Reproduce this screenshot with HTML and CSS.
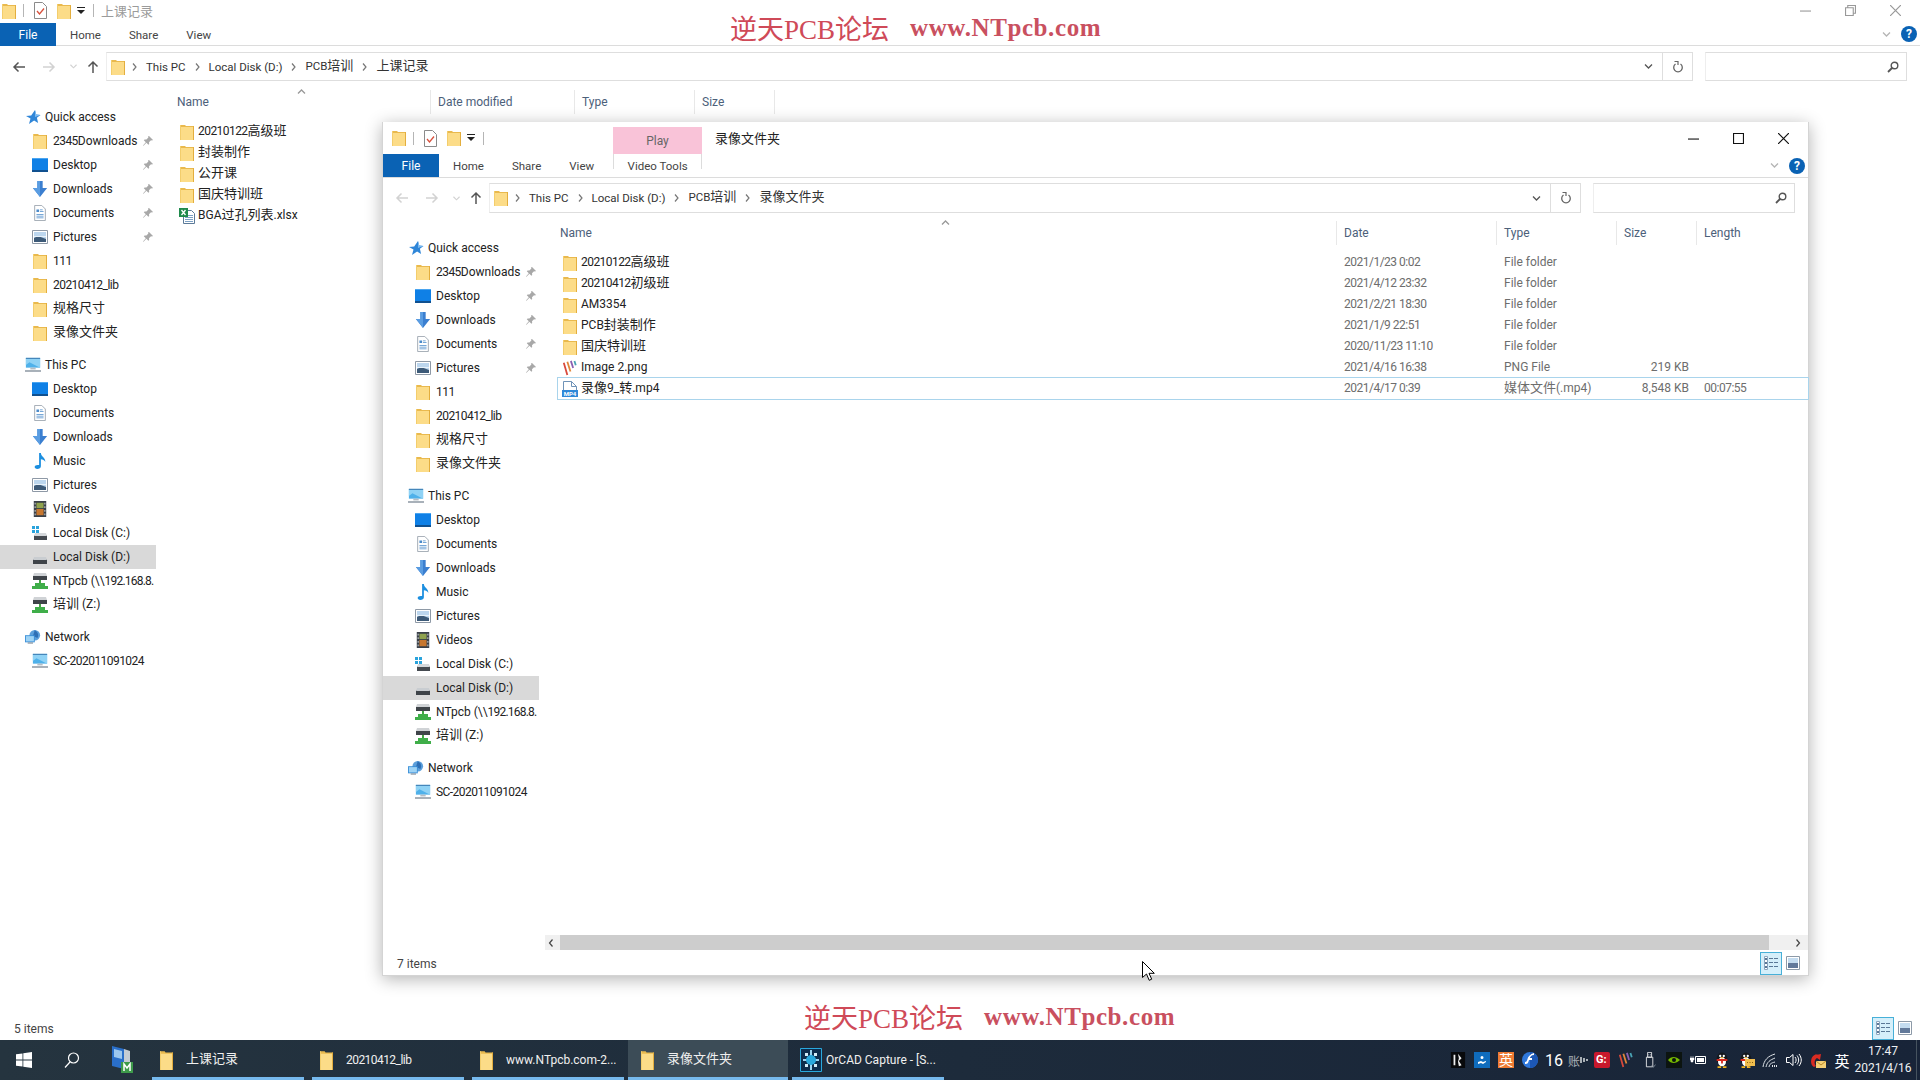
FILE: index.html
```html
<!DOCTYPE html>
<html lang="en">
<head>
    <meta charset="UTF-8">
    <title>录像文件夹</title>
    <link rel="stylesheet" href="styles.css">
</head>
<body>
<svg class="defs">
    <symbol id="folder" viewBox="0 0 14 16" preserveAspectRatio="none"><path d="M0 1h5l1 1h8v14H0z" fill="#e9b94e"/><path d="M0 3h13v13H0z" fill="#fcdc88"/><path d="M0 1h1v15H0z" fill="#f3cd6c"/><path d="M13 2h1v14h-1z" fill="#e3ae3e"/></symbol>
    <symbol id="star" viewBox="0 0 16 16"><path d="M10 1l1.2 4.6L15.5 6l-3.6 2.8 1.2 5.2-4-2.6L4 15l1.5-5.4L1 7l5.200-.6z" fill="#2f86d8"/><path d="M10 1l1.200 4.600L15.500 6 10 8z" fill="#7fbcf0"/></symbol>
    <symbol id="pin" viewBox="0 0 10 10"><path d="M6 0l4 4-1 .6-1-.4-2 2 .2 1.800-.8.800-2-2L.5 9.800 0 9.500l2.800-3.300-2-2 .8-.800 1.800.200 2-2-.4-1z" fill="#a8a8a8"/></symbol>
    <symbol id="desktop" viewBox="0 0 16 14"><path d="M0 0h16v14H0z" fill="#0f80e6"/><path d="M0 0h16v1H0z" fill="#4aa5f0"/><path d="M0 12h16v2H0z" fill="#10508f"/></symbol>
    <symbol id="download" viewBox="0 0 16 18"><path d="M5 0h6v8h5l-8 10L0 8h5z" fill="#3b7fd0"/><path d="M5 0h3v18L0 8h5z" fill="#5a9de2"/></symbol>
    <symbol id="doc" viewBox="0 0 14 18"><path d="M1 .5h8l4 4v13H1z" fill="#fff" stroke="#9aa3ad"/><path d="M3 5h3v3H3zM7 5h3v1H7zM7 7h4v1H7zM3 10h8v1H3zM3 12h8v1H3zM3 14h8v1H3z" fill="#4b8ac9"/></symbol>
    <symbol id="pictures" viewBox="0 0 16 14"><path d="M.5.500h15v13H.5z" fill="#fff" stroke="#8e99a6"/><path d="M2 2h12v10H2z" fill="#bcd6ee"/><path d="M2 8l4-2 8 3v3H2z" fill="#3d5a78"/><path d="M2 6h12v1H2z" fill="#e8f2fa"/></symbol>
    <symbol id="music" viewBox="0 0 12 18"><path d="M5 0h2c0 4 5 5 5 10-1-2-3-3-5-3v8c0 2-2 3-4 3s-3-1-3-2.500S2 13 5 13.500z" fill="#1c8fe0"/></symbol>
    <symbol id="video" viewBox="0 0 14 18"><path d="M0 0h14v18H0z" fill="#3a4048"/><path d="M3 2h8v6H3z" fill="#8fa24e"/><path d="M3 9h8v7H3z" fill="#c7772f"/><path d="M1 2h1v2H1zM1 6h1v2H1zM1 10h1v2H1zM1 14h1v2H1zM12 2h1v2h-1zM12 6h1v2h-1zM12 10h1v2h-1zM12 14h1v2h-1z" fill="#dfe3e6"/></symbol>
    <symbol id="diskc" viewBox="0 0 16 16"><path d="M2 10h13v5H2z" fill="#454a50"/><path d="M3 8h11l1 3H2z" fill="#d5d8db"/><path d="M0 1h3v3H0zM4 1h3v3H4zM0 5h3v3H0zM4 5h3v3H4z" fill="#2aa3dc"/></symbol>
    <symbol id="diskd" viewBox="0 0 16 8"><path d="M1 3h14v5H1z" fill="#3f4449"/><path d="M2 1h12l1 3H1z" fill="#c9cdd1"/></symbol>
    <symbol id="netdisk" viewBox="0 0 16 16"><path d="M2 0h12l1 3H1z" fill="#d0d3d6"/><path d="M1 3h14v4H1z" fill="#3f4449"/><path d="M7 7h2v3H7z" fill="#46a546"/><path d="M3 10h10v3H3zM0 13h16v3H0z" fill="#3fae49"/></symbol>
    <symbol id="pc" viewBox="0 0 18 16"><path d="M1 0h16v11H1z" fill="#4fb1ea"/><path d="M1 0h16v11L5 5 1 8z" fill="#8fd2f5"/><path d="M1 .5h16" stroke="#2c6ca5"/><path d="M6 11h6v2H6z" fill="#b5bdc5"/><path d="M0 14h18v1.500H0z" fill="#7d8a97"/></symbol>
    <symbol id="network" viewBox="0 0 18 18"><circle cx="11" cy="7" r="6" fill="#5b9fdb"/><path d="M11 1c3 2 5 5 3 9l-5-2z" fill="#2e6fb5"/><path d="M0 7h11v8H0z" fill="#3b8fd8"/><path d="M1 8h9v6H1z" fill="#9ed3f5"/><path d="M3 15h6v1.500H3z" fill="#8d99a5"/></symbol>
    <symbol id="xlsx" viewBox="0 0 16 16"><path d="M4.500 2.500h8l3 3v10h-11z" fill="#fff" stroke="#5c7a98"/><path d="M6 7h8v1H6zM6 9h8v1H6zM6 11h8v1H6zM6 13h8v1H6z" fill="#7ba0c4"/><path d="M0 0h9v9H0z" fill="#1f8a4c"/><path d="M2.500 2l4 5M6.500 2l-4 5" stroke="#fff" stroke-width="1.300"/></symbol>
    <symbol id="bars" viewBox="0 0 16 18"><path d="M1 3l4 14" stroke="#d9483b" stroke-width="2" fill="none"/><path d="M5 2l3.500 11" stroke="#e0863a" stroke-width="2" fill="none"/><path d="M9 1l2.500 8" stroke="#8a5fb0" stroke-width="2" fill="none"/><path d="M13 1l1.500 5" stroke="#4aa3b5" stroke-width="2" fill="none"/></symbol>
    <symbol id="mp4" viewBox="0 0 16 16"><path d="M1.500.5h8l5 5v10h-13z" fill="#fff" stroke="#6f93b8"/><path d="M9.500.5v5h5" fill="none" stroke="#6f93b8"/><path d="M0 9h16v7H0z" fill="#2f88d8"/></symbol>
    <symbol id="check-doc" viewBox="0 0 13 17"><path d="M.5.500h8l4 4v12H.5z" fill="#fff" stroke="#8a8a8a"/><path d="M3 9l2.500 3L10 6.500" stroke="#d8503c" stroke-width="1.300" fill="none"/></symbol>
    <symbol id="dropline" viewBox="0 0 8 8"><path d="M0 .5h8" stroke="#222"/><path d="M0 3h8L4 7z" fill="#222"/></symbol>
    <symbol id="arrow-left" viewBox="0 0 14 12"><path d="M13 6H2M6.500 1.500L2 6l4.500 4.500" fill="none" stroke="currentColor" stroke-width="1.500"/></symbol>
    <symbol id="arrow-right" viewBox="0 0 14 12"><path d="M1 6h11M7.500 1.500L12 6l-4.500 4.500" fill="none" stroke="currentColor" stroke-width="1.500"/></symbol>
    <symbol id="arrow-up" viewBox="0 0 12 14"><path d="M6 13V2M1.500 6.500L6 2l4.500 4.500" fill="none" stroke="currentColor" stroke-width="1.500"/></symbol>
    <symbol id="chev-down" viewBox="0 0 8 5"><path d="M.5.500L4 4 7.500.500" fill="none" stroke="currentColor" stroke-width="1.300"/></symbol>
    <symbol id="chev-right" viewBox="0 0 5 8"><path d="M1 .5L4 4 1 7.500" fill="none" stroke="currentColor" stroke-width="1.200"/></symbol>
    <symbol id="refresh" viewBox="0 0 12 12"><path d="M3.500 3a4.300 4.300 0 1 0 5 0" fill="none" stroke="currentColor" stroke-width="1.300"/><path d="M2.500.5h3.500V4" fill="none" stroke="currentColor" stroke-width="1.200"/></symbol>
    <symbol id="search" viewBox="0 0 12 12"><circle cx="7.500" cy="4.500" r="3.300" fill="none" stroke="#555" stroke-width="1.400"/><path d="M5 7L1 11" stroke="#555" stroke-width="1.800"/></symbol>
    <symbol id="minimize" viewBox="0 0 10 10"><path d="M0 5.500h10" stroke="currentColor"/></symbol>
    <symbol id="maximize" viewBox="0 0 10 10"><path d="M.5.500h9v9h-9z" fill="none" stroke="currentColor"/></symbol>
    <symbol id="restore" viewBox="0 0 10 10"><path d="M.5 2.500h7v7h-7zM2.500 2.500v-2h7v7h-2" fill="none" stroke="currentColor"/></symbol>
    <symbol id="close" viewBox="0 0 10 10"><path d="M0 0l10 10M10 0L0 10" stroke="currentColor" stroke-width="1.100"/></symbol>
    <symbol id="view-details" viewBox="0 0 16 16"><path d="M1.500 1.500h3v13h-3z" fill="#fff" stroke="#8ca6bf"/><path d="M2 3h2v2H2zM2 7h2v2H2zM2 11h2v2H2z" fill="#5a7896"/><path d="M6 3h4v1H6zM11 3h4v1h-4zM6 7h4v1H6zM11 7h4v1h-4zM6 11h4v1H6zM11 11h4v1h-4z" fill="#5a7896"/></symbol>
    <symbol id="view-large" viewBox="0 0 14 14"><path d="M.5.500h13v13H.5z" fill="#fff" stroke="#8d9aa8"/><path d="M2 2h10v5H2z" fill="#c4dcf0"/><path d="M2 7h10v5H2z" fill="#62799a"/></symbol>
    <symbol id="win" viewBox="0 0 16 16"><path d="M0 2.300l6.500-.9v6.200H0zM7.300 1.300L16 0v7.600H7.300zM0 8.400h6.500v6.200L0 13.700zM7.300 8.400H16V16l-8.700-1.300z" fill="#fff"/></symbol>
    <symbol id="magnifier" viewBox="0 0 16 16"><circle cx="9.500" cy="6" r="5" fill="none" stroke="#fff" stroke-width="1.200"/><path d="M6 10l-5 5.500" stroke="#fff" stroke-width="1.200"/></symbol>
    <symbol id="server" viewBox="0 0 24 30"><path d="M2 1l12 3v20L2 21z" fill="#2a6fc9"/><path d="M4 4l8 2v8l-8-2z" fill="#9cc7ee"/><path d="M14 4l6 2v18l-6 2z" fill="#c5ccd3"/><path d="M11 17h12v11H11z" fill="#3d9a4a"/><path d="M14 26v-7l3 4 3-4v7" stroke="#fff" stroke-width="1.500" fill="none"/></symbol>
    <symbol id="orcad" viewBox="0 0 22 24"><path d="M.5.500h21v23H.5z" fill="#0d2d4d" stroke="#2aa8dc"/><path d="M11 2v20M3 12h16" stroke="#9ad4f0" stroke-width="2"/><circle cx="11" cy="12" r="5" fill="#2aa8dc"/><path d="M5 5h3v3H5zM14 5h3v3h-3zM5 16h3v3H5zM14 16h3v3h-3z" fill="#d5edf8"/></symbol>
    <symbol id="tray-black" viewBox="0 0 16 18"><path d="M0 0h16v18H0z" fill="#08090b"/><path d="M3 3h2v12H3zM8 2l4 5-3 3 3 5-3 1-1-5 1-4z" fill="#eee"/></symbol>
    <symbol id="tray-blue" viewBox="0 0 16 16"><path d="M0 0h16v16H0z" fill="#0f6cbd"/><path d="M8 4a1 1 0 0 1 0 3 1 1 0 0 1 0-3zM4 10l3-1 2 1 3-1v1l-3 2-2-1-3 1z" fill="#fff"/></symbol>
    <symbol id="tray-flash" viewBox="0 0 16 16"><circle cx="8" cy="8" r="8" fill="#2f78dc"/><path d="M8 0a8 8 0 0 1 0 16z" fill="#1c57b5"/><path d="M12 3c-3 0-4 2-5 5s-1 4-4 4v-2c1.500 0 2-1 2.500-3S8 2 12 1z" fill="#fff"/><path d="M6 6h4v2H6z" fill="#fff"/></symbol>
    <symbol id="tray-dots" viewBox="0 0 8 8"><path d="M0 1h2v6H0zM3 2h2v4H3zM6 3h2v2H6z" fill="#a9b0b6"/></symbol>
    <symbol id="tray-usb" viewBox="0 0 16 20"><path d="M3.500 6.500h8v12h-8zM5 .5h5v6H5z" fill="none" stroke="#fff"/><path d="M6 3h1v1H6zM8 3h1v1H8z" fill="#fff"/><path d="M10 17l2 2 3-3" stroke="#9aa7b2" fill="none"/></symbol>
    <symbol id="tray-nvidia" viewBox="0 0 16 16"><path d="M0 0h16v16H0z" fill="#0c1410"/><path d="M2 8c3-4 8-4 12 0-4 4-9 4-12 0z" fill="#76b900"/><circle cx="8" cy="8" r="2" fill="#0c1410"/></symbol>
    <symbol id="tray-battery" viewBox="0 0 16 12"><path d="M5.500 2.500h10v7h-10z" fill="none" stroke="#fff"/><path d="M7 4h7v4H7z" fill="#fff"/><path d="M1 2v2M3 2v2M0 4h4v2H3v2H1V6H0z" stroke="#fff" fill="#fff" stroke-width=".5"/></symbol>
    <symbol id="tray-qq" viewBox="0 0 16 18"><ellipse cx="8" cy="8" rx="6" ry="7.500" fill="#15181c"/><ellipse cx="8" cy="11" rx="4.500" ry="5" fill="#fff"/><circle cx="6" cy="4.500" r="1.300" fill="#fff"/><circle cx="10" cy="4.500" r="1.300" fill="#fff"/><path d="M6 6h4l-2 1.500z" fill="#f2b21b"/><path d="M2 8h12v2H9v3H7v-3H2z" fill="#d8281e"/><path d="M3 16h4v2H3zM9 16h4v2H9z" fill="#f2b21b"/></symbol>
    <symbol id="tray-msg" viewBox="0 0 10 9"><path d="M0 0h10v7H4L2 9V7H0z" fill="#f0bd4e"/><path d="M2 3h1v1H2zM4.500 3h1v1h-1zM7 3h1v1H7z" fill="#8a5f12"/></symbol>
    <symbol id="tray-wifi" viewBox="0 0 16 16"><path d="M1 15C2 8 6 4 13 2M4 15c1-5 4-7 9-9M7 15c.5-3 2-4 6-5" fill="none" stroke="#dfe4e8"/><path d="M10 13h1v2h-1zM12 13h1v2h-1zM14 13h1v2h-1z" fill="#dfe4e8"/></symbol>
    <symbol id="tray-speaker" viewBox="0 0 16 16"><path d="M.5 5.500h3l3.500-3v11l-3.500-3h-3z" fill="none" stroke="#fff"/><path d="M9 5c1.500 2 1.500 4 0 6M11 3.500c2.200 3 2.200 6 0 9M13 2c3 4 3 8 0 12" fill="none" stroke="#fff"/></symbol>
    <symbol id="tray-mail" viewBox="0 0 16 16"><path d="M8 2a7 7 0 0 0-7 7c0 3 1 5 3 6l2-1C4 12 4 8 7 6l3 2 1-6-5 1z" fill="#d92b22"/><path d="M6 9h10v7H6z" fill="#f4cf74"/><path d="M6 9l5 4 5-4" fill="none" stroke="#b98a2a"/></symbol>
    <symbol id="cursor" viewBox="0 0 13 20"><path d="M.5.500v16l4-3.500 2.700 6.300 2.500-1.100L7 12.300h5.300z" fill="#fff" stroke="#000"/></symbol>
</svg>

<div class="desktop">
    <div class="window back-window">
        <div class="titlebar">
            <div class="qat">
                <svg class="ic-folder"><use href="#folder"/></svg>
                <i class="qat-sep"></i>
                <svg class="ic-check"><use href="#check-doc"/></svg>
                <svg class="ic-folder"><use href="#folder"/></svg>
                <svg class="ic-drop"><use href="#dropline"/></svg>
                <i class="qat-sep"></i>
            </div>
            <span class="title">上课记录</span>
            <div class="caption">
                <button><svg><use href="#minimize"/></svg></button>
                <button><svg><use href="#restore"/></svg></button>
                <button><svg><use href="#close"/></svg></button>
            </div>
        </div>
        <div class="tabs">
            <span class="tab tab-file">File</span>
            <span class="tab">Home</span>
            <span class="tab">Share</span>
            <span class="tab">View</span>
            <svg class="ribbon-chev"><use href="#chev-down"/></svg>
            <span class="help">?</span>
        </div>
        <div class="addressrow">
            <div class="navbtns">
                <svg class="nav-arrow"><use href="#arrow-left"/></svg>
                <svg class="nav-arrow off"><use href="#arrow-right"/></svg>
                <svg class="nav-small off"><use href="#chev-down"/></svg>
                <svg class="nav-up"><use href="#arrow-up"/></svg>
            </div>
            <div class="address">
                <svg class="ic-folder"><use href="#folder"/></svg>
                <svg class="crumb-chev"><use href="#chev-right"/></svg><span>This PC</span>
                <svg class="crumb-chev"><use href="#chev-right"/></svg><span>Local Disk (D:)</span>
                <svg class="crumb-chev"><use href="#chev-right"/></svg><span>PCB<span class="zh">培训</span></span>
                <svg class="crumb-chev"><use href="#chev-right"/></svg><span class="zh">上课记录</span>
                <svg class="addr-drop"><use href="#chev-down"/></svg>
                <div class="addr-refresh"><svg><use href="#refresh"/></svg></div>
            </div>
            <div class="searchbox"><svg><use href="#search"/></svg></div>
        </div>
        <div class="content">
            <div class="tree">
                <div class="tree-group">
                    <div class="tree-head"><svg><use href="#star"/></svg><span>Quick access</span></div>
                    <div class="tree-item"><svg class="ic-folder"><use href="#folder"/></svg><span><span class="dg">2345</span>Downloads</span><svg class="pin"><use href="#pin"/></svg></div>
                    <div class="tree-item"><svg><use href="#desktop"/></svg><span>Desktop</span><svg class="pin"><use href="#pin"/></svg></div>
                    <div class="tree-item"><svg><use href="#download"/></svg><span>Downloads</span><svg class="pin"><use href="#pin"/></svg></div>
                    <div class="tree-item"><svg><use href="#doc"/></svg><span>Documents</span><svg class="pin"><use href="#pin"/></svg></div>
                    <div class="tree-item"><svg><use href="#pictures"/></svg><span>Pictures</span><svg class="pin"><use href="#pin"/></svg></div>
                    <div class="tree-item"><svg class="ic-folder"><use href="#folder"/></svg><span class="dg">111</span></div>
                    <div class="tree-item"><svg class="ic-folder"><use href="#folder"/></svg><span class="dg">20210412_lib</span></div>
                    <div class="tree-item"><svg class="ic-folder"><use href="#folder"/></svg><span class="zh">规格尺寸</span></div>
                    <div class="tree-item"><svg class="ic-folder"><use href="#folder"/></svg><span class="zh">录像文件夹</span></div>
                </div>
                <div class="tree-group">
                    <div class="tree-head"><svg><use href="#pc"/></svg><span>This PC</span></div>
                    <div class="tree-item"><svg><use href="#desktop"/></svg><span>Desktop</span></div>
                    <div class="tree-item"><svg><use href="#doc"/></svg><span>Documents</span></div>
                    <div class="tree-item"><svg><use href="#download"/></svg><span>Downloads</span></div>
                    <div class="tree-item"><svg><use href="#music"/></svg><span>Music</span></div>
                    <div class="tree-item"><svg><use href="#pictures"/></svg><span>Pictures</span></div>
                    <div class="tree-item"><svg><use href="#video"/></svg><span>Videos</span></div>
                    <div class="tree-item"><svg><use href="#diskc"/></svg><span>Local Disk (C:)</span></div>
                    <div class="tree-item selected"><svg class="ic-disk"><use href="#diskd"/></svg><span>Local Disk (D:)</span></div>
                    <div class="tree-item"><svg><use href="#netdisk"/></svg><span>NTpcb (\\<span class="dg-tight">192.168.8.</span></span></div>
                    <div class="tree-item"><svg><use href="#netdisk"/></svg><span><span class="zh">培训</span> (Z:)</span></div>
                </div>
                <div class="tree-group">
                    <div class="tree-head"><svg><use href="#network"/></svg><span>Network</span></div>
                    <div class="tree-item"><svg><use href="#pc"/></svg><span class="dg">SC-202011091024</span></div>
                </div>
            </div>
            <div class="pane">
                <div class="cols cols-back col-head">
                    <span class="cell-name">Name<svg class="sort"><use href="#chev-down"/></svg></span>
                    <span>Date modified</span>
                    <span>Type</span>
                    <span>Size</span>
                </div>
                <div class="rows">
                    <div class="cols cols-back row"><span class="fname"><svg class="ic-folder"><use href="#folder"/></svg><span class="dg">20210122</span><span class="zh">高级班</span></span></div>
                    <div class="cols cols-back row"><span class="fname"><svg class="ic-folder"><use href="#folder"/></svg><span class="zh">封装制作</span></span></div>
                    <div class="cols cols-back row"><span class="fname"><svg class="ic-folder"><use href="#folder"/></svg><span class="zh">公开课</span></span></div>
                    <div class="cols cols-back row"><span class="fname"><svg class="ic-folder"><use href="#folder"/></svg><span class="zh">国庆特训班</span></span></div>
                    <div class="cols cols-back row"><span class="fname"><svg class="ic-file"><use href="#xlsx"/></svg>BGA<span class="zh">过孔列表</span>.xlsx</span></div>
                </div>
            </div>
        </div>
        <div class="statusbar">
            <span>5 items</span>
            <span class="view-btn active"><svg><use href="#view-details"/></svg></span>
            <span class="view-btn plain"><svg><use href="#view-large"/></svg></span>
        </div>
    </div>

    <div class="window front-window">
        <div class="titlebar">
            <div class="qat">
                <svg class="ic-folder"><use href="#folder"/></svg>
                <i class="qat-sep"></i>
                <svg class="ic-check"><use href="#check-doc"/></svg>
                <svg class="ic-folder"><use href="#folder"/></svg>
                <svg class="ic-drop"><use href="#dropline"/></svg>
                <i class="qat-sep"></i>
            </div>
            <span class="play-tab">Play</span>
            <span class="title">录像文件夹</span>
            <div class="caption">
                <button><svg><use href="#minimize"/></svg></button>
                <button><svg><use href="#maximize"/></svg></button>
                <button><svg><use href="#close"/></svg></button>
            </div>
        </div>
        <div class="tabs">
            <span class="tab tab-file">File</span>
            <span class="tab">Home</span>
            <span class="tab">Share</span>
            <span class="tab">View</span>
            <span class="tab tab-tools">Video Tools</span>
            <svg class="ribbon-chev"><use href="#chev-down"/></svg>
            <span class="help">?</span>
        </div>
        <div class="addressrow">
            <div class="navbtns">
                <svg class="nav-arrow off"><use href="#arrow-left"/></svg>
                <svg class="nav-arrow off"><use href="#arrow-right"/></svg>
                <svg class="nav-small off"><use href="#chev-down"/></svg>
                <svg class="nav-up"><use href="#arrow-up"/></svg>
            </div>
            <div class="address">
                <svg class="ic-folder"><use href="#folder"/></svg>
                <svg class="crumb-chev"><use href="#chev-right"/></svg><span>This PC</span>
                <svg class="crumb-chev"><use href="#chev-right"/></svg><span>Local Disk (D:)</span>
                <svg class="crumb-chev"><use href="#chev-right"/></svg><span>PCB<span class="zh">培训</span></span>
                <svg class="crumb-chev"><use href="#chev-right"/></svg><span class="zh">录像文件夹</span>
                <svg class="addr-drop"><use href="#chev-down"/></svg>
                <div class="addr-refresh"><svg><use href="#refresh"/></svg></div>
            </div>
            <div class="searchbox"><svg><use href="#search"/></svg></div>
        </div>
        <div class="content">
            <div class="tree">
                <div class="tree-group">
                    <div class="tree-head"><svg><use href="#star"/></svg><span>Quick access</span></div>
                    <div class="tree-item"><svg class="ic-folder"><use href="#folder"/></svg><span><span class="dg">2345</span>Downloads</span><svg class="pin"><use href="#pin"/></svg></div>
                    <div class="tree-item"><svg><use href="#desktop"/></svg><span>Desktop</span><svg class="pin"><use href="#pin"/></svg></div>
                    <div class="tree-item"><svg><use href="#download"/></svg><span>Downloads</span><svg class="pin"><use href="#pin"/></svg></div>
                    <div class="tree-item"><svg><use href="#doc"/></svg><span>Documents</span><svg class="pin"><use href="#pin"/></svg></div>
                    <div class="tree-item"><svg><use href="#pictures"/></svg><span>Pictures</span><svg class="pin"><use href="#pin"/></svg></div>
                    <div class="tree-item"><svg class="ic-folder"><use href="#folder"/></svg><span class="dg">111</span></div>
                    <div class="tree-item"><svg class="ic-folder"><use href="#folder"/></svg><span class="dg">20210412_lib</span></div>
                    <div class="tree-item"><svg class="ic-folder"><use href="#folder"/></svg><span class="zh">规格尺寸</span></div>
                    <div class="tree-item"><svg class="ic-folder"><use href="#folder"/></svg><span class="zh">录像文件夹</span></div>
                </div>
                <div class="tree-group">
                    <div class="tree-head"><svg><use href="#pc"/></svg><span>This PC</span></div>
                    <div class="tree-item"><svg><use href="#desktop"/></svg><span>Desktop</span></div>
                    <div class="tree-item"><svg><use href="#doc"/></svg><span>Documents</span></div>
                    <div class="tree-item"><svg><use href="#download"/></svg><span>Downloads</span></div>
                    <div class="tree-item"><svg><use href="#music"/></svg><span>Music</span></div>
                    <div class="tree-item"><svg><use href="#pictures"/></svg><span>Pictures</span></div>
                    <div class="tree-item"><svg><use href="#video"/></svg><span>Videos</span></div>
                    <div class="tree-item"><svg><use href="#diskc"/></svg><span>Local Disk (C:)</span></div>
                    <div class="tree-item selected"><svg class="ic-disk"><use href="#diskd"/></svg><span>Local Disk (D:)</span></div>
                    <div class="tree-item"><svg><use href="#netdisk"/></svg><span>NTpcb (\\<span class="dg-tight">192.168.8.</span></span></div>
                    <div class="tree-item"><svg><use href="#netdisk"/></svg><span><span class="zh">培训</span> (Z:)</span></div>
                </div>
                <div class="tree-group">
                    <div class="tree-head"><svg><use href="#network"/></svg><span>Network</span></div>
                    <div class="tree-item"><svg><use href="#pc"/></svg><span class="dg">SC-202011091024</span></div>
                </div>
            </div>
            <div class="pane">
                <div class="cols cols-front col-head">
                    <span class="cell-name">Name<svg class="sort"><use href="#chev-down"/></svg></span>
                    <span>Date</span>
                    <span>Type</span>
                    <span>Size</span>
                    <span>Length</span>
                </div>
                <div class="rows">
                    <div class="cols cols-front row"><span class="fname"><svg class="ic-folder"><use href="#folder"/></svg><span class="dg">20210122</span><span class="zh">高级班</span></span><span class="date">2021/1/23 0:02</span><span>File folder</span></div>
                    <div class="cols cols-front row"><span class="fname"><svg class="ic-folder"><use href="#folder"/></svg><span class="dg">20210412</span><span class="zh">初级班</span></span><span class="date">2021/4/12 23:32</span><span>File folder</span></div>
                    <div class="cols cols-front row"><span class="fname"><svg class="ic-folder"><use href="#folder"/></svg>AM3354</span><span class="date">2021/2/21 18:30</span><span>File folder</span></div>
                    <div class="cols cols-front row"><span class="fname"><svg class="ic-folder"><use href="#folder"/></svg>PCB<span class="zh">封装制作</span></span><span class="date">2021/1/9 22:51</span><span>File folder</span></div>
                    <div class="cols cols-front row"><span class="fname"><svg class="ic-folder"><use href="#folder"/></svg><span class="zh">国庆特训班</span></span><span class="date">2020/11/23 11:10</span><span>File folder</span></div>
                    <div class="cols cols-front row"><span class="fname"><svg class="ic-file"><use href="#bars"/></svg>Image 2.png</span><span class="date">2021/4/16 16:38</span><span>PNG File</span><span class="num">219 KB</span></div>
                    <div class="cols cols-front row row-focus"><span class="fname"><svg class="ic-file" viewBox="0 0 16 16"><use href="#mp4"/><text class="mp4-label" x="8" y="15">MP4</text></svg><span class="zh">录像</span>9_<span class="zh">转</span>.mp4</span><span class="date">2021/4/17 0:39</span><span><span class="zh">媒体文件</span>(.mp4)</span><span class="num">8,548 KB</span><span class="date">00:07:55</span></div>
                </div>
                <div class="hscroll">
                    <svg class="hs-arrow"><use href="#chev-right"/></svg>
                    <div class="hs-thumb"></div>
                    <svg class="hs-arrow"><use href="#chev-right"/></svg>
                </div>
            </div>
        </div>
        <div class="statusbar">
            <span>7 items</span>
            <span class="view-btn active"><svg><use href="#view-details"/></svg></span>
            <span class="view-btn plain"><svg><use href="#view-large"/></svg></span>
        </div>
    </div>

    <div class="watermark wm-top">逆天PCB论坛<b>www.NTpcb.com</b></div>
    <div class="watermark wm-bottom">逆天PCB论坛<b>www.NTpcb.com</b></div>
    <svg class="cursor"><use href="#cursor"/></svg>
</div>

<div class="taskbar">
    <div class="tb-icon"><svg class="tb-win"><use href="#win"/></svg></div>
    <div class="tb-icon"><svg class="tb-win"><use href="#magnifier"/></svg></div>
    <div class="tb-icon tb-server"><svg><use href="#server"/></svg></div>
    <div class="task"><svg class="ic-folder"><use href="#folder"/></svg><span class="zh">上课记录</span></div>
    <div class="task"><svg class="ic-folder"><use href="#folder"/></svg><span class="dg">20210412_lib</span></div>
    <div class="task"><svg class="ic-folder"><use href="#folder"/></svg><span>www.NTpcb.com-2...</span></div>
    <div class="task task-active"><svg class="ic-folder"><use href="#folder"/></svg><span class="zh">录像文件夹</span></div>
    <div class="task task-orcad"><svg><use href="#orcad"/></svg><span>OrCAD Capture - [S...</span></div>
    <div class="tray">
        <span class="tray-item"><svg><use href="#tray-black"/></svg></span>
        <span class="tray-item"><svg><use href="#tray-blue"/></svg></span>
        <span class="tray-item"><span class="tray-ime">英</span></span>
        <span class="tray-item"><svg><use href="#tray-flash"/></svg></span>
        <span class="tray-item tray-num">16</span>
        <span class="tray-item tray-acct">账<svg><use href="#tray-dots"/></svg></span>
        <span class="tray-item"><span class="tray-red">G:</span></span>
        <span class="tray-item"><svg><use href="#bars"/></svg></span>
        <span class="tray-item"><svg><use href="#tray-usb"/></svg></span>
        <span class="tray-item"><svg><use href="#tray-nvidia"/></svg></span>
        <span class="tray-item"><svg><use href="#tray-battery"/></svg></span>
        <span class="tray-item"><svg><use href="#tray-qq"/></svg></span>
        <span class="tray-item tray-qqmsg"><svg><use href="#tray-qq"/></svg><svg class="msg"><use href="#tray-msg"/></svg></span>
        <span class="tray-item"><svg><use href="#tray-wifi"/></svg></span>
        <span class="tray-item"><svg><use href="#tray-speaker"/></svg></span>
        <span class="tray-item"><svg><use href="#tray-mail"/></svg></span>
        <span class="tray-item tray-lang">英</span>
    </div>
    <div class="clock"><span>17:47</span><span>2021/4/16</span></div>
    <div class="show-desktop"></div>
</div>
</body>
</html>
```

FILE: styles.css
```css
* {
    margin: 0;
    padding: 0;
    box-sizing: border-box;
}

html, body {
    width: 1920px;
    height: 1080px;
    overflow: hidden;
}

body {
    display: flex;
    flex-direction: column;
    background: #fff;
    font-family: Roboto, "Noto Sans CJK SC", sans-serif;
    font-size: 12px;
    color: #222;
}

.defs {
    width: 0;
    height: 0;
    position: absolute;
}

svg {
    display: block;
    flex: none;
}

/* chinese runs are a size up from the latin text, digits sit tighter */
.zh {
    display: inline-block;
    font-size: 13px;
    line-height: 15px;
    padding-bottom: 3px;
    vertical-align: 0;
}

.dg {
    letter-spacing: -0.55px;
}

.dg-tight {
    letter-spacing: -0.8px;
}

.desktop {
    flex: 1;
    position: relative;
    overflow: hidden;
}

/* windows */
.window {
    display: flex;
    flex-direction: column;
    background: #fff;
}

.back-window {
    height: 100%;
}

.front-window {
    position: absolute;
    left: 382px;
    top: 122px;
    width: 1427px;
    height: 854px;
    border: 1px solid #d4d4d4;
    border-top: 0;
    box-shadow: 0 3px 16px rgba(0, 0, 0, 0.3);
}

.titlebar {
    display: flex;
    align-items: center;
    height: 23px;
    padding-bottom: 2px;
    flex: none;
}

.front-window .titlebar {
    height: 32px;
    padding-bottom: 0;
}

.qat {
    display: flex;
    align-items: center;
    gap: 7px;
    padding-left: 2px;
    width: 101px;
    flex: none;
}

.front-window .qat {
    padding-left: 9px;
    width: 230px;
}

.qat-sep {
    width: 1px;
    height: 13px;
    background: #b5b5b5;
}

.ic-folder {
    width: 14px;
    height: 16px;
}

.ic-check {
    width: 13px;
    height: 17px;
    margin-left: 3px;
    margin-right: 3px;
}

.ic-drop {
    width: 8px;
    height: 8px;
    margin-left: -1px;
    margin-right: 1px;
}

.title {
    color: #9b9b9b;
    font-size: 13px;
}

.front-window .title {
    color: #222;
    margin-left: 13px;
    margin-bottom: 2px;
}

.play-tab {
    align-self: flex-end;
    width: 89px;
    height: 27px;
    line-height: 28px;
    text-align: center;
    background: #f9c3d8;
    color: #666;
}

.caption {
    display: flex;
    margin-left: auto;
    padding-right: 2px;
}

.caption button {
    display: flex;
    align-items: center;
    justify-content: center;
    width: 45px;
    height: 21px;
    border: 0;
    background: none;
    color: #999;
}

.front-window .caption button {
    height: 32px;
    color: #111;
}

.caption svg {
    width: 11px;
    height: 11px;
}

.tabs {
    display: flex;
    align-items: center;
    height: 23px;
    flex: none;
    border-bottom: 1px solid #dcdcdc;
}

.front-window .tabs {
    height: 24px;
}

.tab {
    padding: 0 14px;
    height: 23px;
    line-height: 25px;
    font-size: 11.5px;
    color: #444;
}

.tab-file {
    width: 56px;
    padding: 0;
    text-align: center;
    background: #0a62b4;
    color: #fff;
    font-size: 12px;
}

.tab-tools {
    width: 89px;
    padding: 0;
    margin-left: 5px;
    text-align: center;
    height: 15px;
    align-self: flex-start;
    border-left: 1px solid #dcdcdc;
    border-right: 1px solid #dcdcdc;
}

.ribbon-chev {
    width: 9px;
    height: 5px;
    margin-left: auto;
    color: #b5b5b5;
}

.help {
    width: 16px;
    height: 16px;
    margin: 0 3px 0 10px;
    border-radius: 50%;
    background: #0a62b4;
    color: #fff;
    font-weight: 700;
    line-height: 16px;
    text-align: center;
}

/* address row */
.addressrow {
    display: flex;
    flex: none;
    height: 29px;
    margin-top: 6px;
    padding-right: 13px;
    font-size: 11.5px;
}

.front-window .addressrow {
    height: 30px;
    margin-top: 5px;
}

.navbtns {
    display: flex;
    align-items: center;
    width: 106px;
    flex: none;
    padding-left: 12px;
    color: #555;
}

.nav-arrow {
    width: 14px;
    height: 12px;
    margin-right: 16px;
}

.nav-small {
    width: 7px;
    height: 5px;
    margin-right: 10px;
    margin-left: -2px;
}

.nav-up {
    width: 12px;
    height: 14px;
}

.off {
    color: #d2d2d2;
}

.address {
    display: flex;
    align-items: center;
    flex: 1;
    gap: 9px;
    padding-left: 4px;
    border: 1px solid #dedede;
    border-left-color: #eee;
    color: #333;
}

.address > .ic-folder {
    margin-right: -2px;
}

.crumb-chev {
    width: 5px;
    height: 8px;
    color: #777;
}

.addr-drop {
    width: 9px;
    height: 5px;
    margin-left: auto;
    margin-right: 9px;
    color: #555;
}

.addr-refresh {
    display: flex;
    align-items: center;
    justify-content: center;
    width: 30px;
    height: 100%;
    margin-left: -9px;
    border-left: 1px solid #dedede;
    color: #666;
}

.addr-refresh svg {
    width: 12px;
    height: 12px;
}

.searchbox {
    display: flex;
    align-items: center;
    justify-content: flex-end;
    width: 202px;
    margin-left: 12px;
    padding-right: 7px;
    border: 1px solid #dedede;
    border-left-color: #eee;
}

.searchbox svg {
    width: 12px;
    height: 12px;
}

.content {
    display: flex;
    flex: 1;
    min-height: 0;
}

/* navigation tree */
.tree {
    width: 156px;
    flex: none;
    padding-top: 24px;
}

.front-window .tree {
    padding-top: 23px;
}

.tree-group {
    margin-bottom: 8px;
}

.tree-head, .tree-item {
    display: flex;
    align-items: center;
    height: 24px;
    overflow: hidden;
    white-space: nowrap;
}

.tree-head {
    padding-left: 25px;
    gap: 4px;
}

.tree-head svg {
    width: 16px;
    height: 16px;
}

.tree-item {
    padding: 0 3px 0 32px;
}

.tree-item > svg:first-child {
    width: 16px;
    height: 16px;
    margin-right: 5px;
}

.tree-item > svg.ic-folder {
    width: 14px;
    height: 16px;
    margin-left: 1px;
    margin-right: 6px;
}

.tree-item > svg.ic-disk {
    height: 8px;
    margin-top: 5px;
}

.tree-item.selected {
    background: #d9d9d9;
}

.pin {
    width: 10px;
    height: 10px;
    margin-left: auto;
}

/* file list */
.pane {
    display: flex;
    flex-direction: column;
    flex: 1;
    min-width: 0;
}

.cols {
    display: grid;
    margin-left: 19px;
}

.cols-back {
    grid-template-columns: 256px 144px 120px 80px;
}

.cols-front {
    grid-template-columns: 779px 160px 120px 80px 109px;
}

.col-head {
    height: 24px;
    margin-top: 9px;
    line-height: 24px;
    color: #4c607a;
}

.front-window .col-head {
    margin-top: 8px;
}

.col-head span {
    padding-left: 7px;
    border-right: 1px solid #e8e8e8;
}

.cols-front.col-head span:last-child {
    border-right: 0;
}

.col-head .cell-name {
    position: relative;
    padding-left: 2px;
}

.sort {
    position: absolute;
    left: calc(50% - 6px);
    top: -1px;
    width: 9px;
    height: 5px;
    color: #999;
    transform: rotate(180deg);
}

.rows {
    flex: 1;
    padding-top: 7px;
}

.row {
    height: 21px;
    line-height: 21px;
    color: #6d6d6d;
}

.row > span {
    padding-left: 7px;
    white-space: nowrap;
}

.row .date {
    letter-spacing: -0.5px;
}

.row > .fname {
    display: flex;
    align-items: center;
    padding-left: 5px;
    color: #222;
}

.row > .num {
    padding: 0 8px 0 0;
    text-align: right;
}

.fname svg {
    margin-right: 4px;
}

.fname svg.ic-file {
    width: 16px;
    height: 16px;
    margin-left: -1px;
    margin-right: 3px;
}

.mp4-label {
    font-size: 6px;
    font-weight: 700;
    fill: #fff;
    text-anchor: middle;
}

.row-focus {
    outline: 1px solid #a9d4ec;
    outline-offset: 0;
}

.hscroll {
    display: flex;
    align-items: center;
    height: 15px;
    margin: 0 0 1px 6px;
    background: #f0f0f0;
    flex: none;
    color: #444;
}

.hs-arrow {
    width: 6px;
    height: 8px;
    margin-left: 3px;
}

.hs-arrow:first-child {
    transform: rotate(180deg);
    margin-right: 6px;
}

.hs-thumb {
    width: 1209px;
    height: 100%;
    margin-right: 23px;
    background: #cdcdcd;
}

.statusbar {
    display: flex;
    align-items: center;
    height: 24px;
    flex: none;
    padding: 0 8px 0 14px;
    color: #444;
}

.statusbar span:first-child {
    margin-right: auto;
    padding-top: 2px;
}

.view-btn {
    display: flex;
    align-items: center;
    justify-content: center;
    width: 22px;
    height: 23px;
}

.view-btn.plain {
    width: 14px;
    margin-left: 4px;
}

.view-btn.active {
    background: #d5effa;
    border: 1px solid #47b0d8;
}

.view-btn svg {
    width: 16px;
    height: 16px;
}

.view-btn.plain svg {
    width: 14px;
    height: 14px;
}

/* overlays */
.watermark {
    position: absolute;
    display: flex;
    align-items: center;
    gap: 21px;
    font-family: "Liberation Serif", "Noto Sans CJK SC", serif;
    font-size: 27px;
    color: #cf4a58;
    white-space: nowrap;
}

.watermark b {
    font-size: 25px;
    letter-spacing: 0.6px;
    color: #c9505f;
}

.wm-top {
    left: 730px;
    top: 8px;
}

.wm-bottom {
    left: 804px;
    top: 997px;
}

.cursor {
    position: absolute;
    left: 1142px;
    top: 961px;
    width: 13px;
    height: 20px;
}

/* taskbar */
.taskbar {
    display: flex;
    align-items: center;
    height: 40px;
    flex: none;
    background: linear-gradient(90deg, #25343f, #1d2b3b 50%, #182438);
    color: #f0f0f0;
}

.tb-icon {
    display: flex;
    align-items: center;
    justify-content: center;
    width: 48px;
    height: 100%;
}

.tb-server {
    width: 52px;
}

.tb-win {
    width: 16px;
    height: 16px;
}

.tb-server svg {
    width: 24px;
    height: 30px;
}

.task {
    display: flex;
    align-items: center;
    gap: 13px;
    width: 160px;
    height: 100%;
    padding-left: 12px;
    position: relative;
}

.task .ic-folder {
    width: 13px;
    height: 20px;
}

.task::after {
    content: "";
    position: absolute;
    left: 4px;
    right: 4px;
    bottom: 0;
    height: 3px;
    background: #76b9ed;
}

.task-active {
    background: #3c4c57;
    padding-left: 13px;
}

.task-active::after {
    left: 0;
    right: 0;
}

.task svg:not(.ic-folder) {
    width: 22px;
    height: 24px;
}

.task-orcad {
    gap: 4px;
}

.tray {
    display: flex;
    align-items: center;
    margin-left: auto;
    height: 100%;
}

.tray-item {
    display: flex;
    align-items: center;
    justify-content: center;
    position: relative;
    width: 24px;
}

.tray-item svg {
    width: 16px;
    height: 16px;
}

.tray-ime {
    width: 16px;
    height: 16px;
    background: #ee7b33;
    color: #fff;
    font-size: 14px;
    line-height: 16px;
    text-align: center;
}

.tray-num {
    font-size: 16px;
    color: #fff;
}

.tray-acct {
    color: #a9b0b6;
    font-size: 12px;
}

.tray-acct svg {
    width: 8px;
    height: 8px;
}

.tray-red {
    width: 16px;
    height: 16px;
    border-radius: 2px;
    background: #c8182c;
    color: #fff;
    font-size: 11px;
    font-weight: 700;
    line-height: 16px;
    padding-left: 2px;
}

.tray-qqmsg svg.msg {
    position: absolute;
    right: 3px;
    bottom: 0;
    width: 10px;
    height: 9px;
}

.tray-lang {
    font-size: 15px;
    color: #fff;
}

.clock {
    display: flex;
    flex-direction: column;
    align-items: center;
    gap: 2px;
    width: 58px;
    color: #eef1f3;
    line-height: 15px;
}

.show-desktop {
    width: 4px;
    height: 100%;
    margin-left: 4px;
    border-left: 1px solid #46535f;
}
```
